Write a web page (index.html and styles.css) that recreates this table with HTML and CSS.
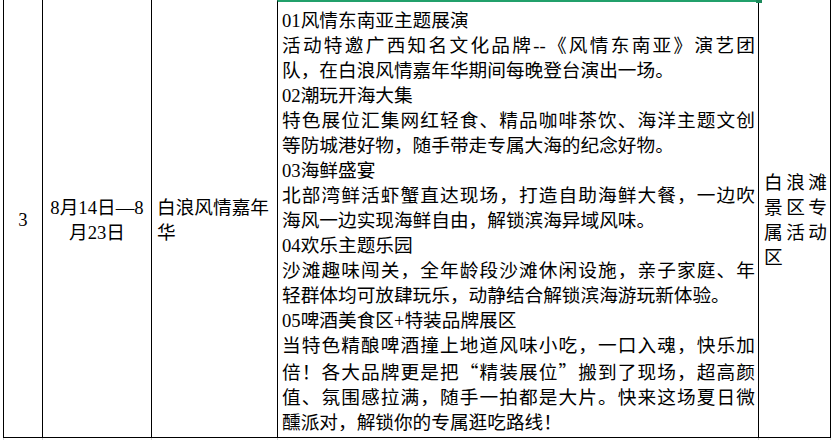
FILE: index.html
```html
<!DOCTYPE html>
<html lang="zh-CN">
<head>
<meta charset="utf-8">
<title>活动安排</title>
<link rel="stylesheet" href="styles.css">
</head>
<body>
<div class="sheet">
  <div class="row">
    <div class="cell c-no">3</div>
    <div class="cell c-date">8月14日—8<br>月23日</div>
    <div class="cell c-name">白浪风情嘉年<br>华</div>
    <div class="cell c-content">
      <div class="ln">01风情东南亚主题展演</div>
      <div class="ln j">活动特邀广西知名文化品牌--《风情东南亚》演艺团</div>
      <div class="ln">队，在白浪风情嘉年华期间每晚登台演出一场。</div>
      <div class="ln">02潮玩开海大集</div>
      <div class="ln j">特色展位汇集网红轻食、精品咖啡茶饮、海洋主题文创</div>
      <div class="ln">等防城港好物，随手带走专属大海的纪念好物。</div>
      <div class="ln">03海鲜盛宴</div>
      <div class="ln j">北部湾鲜活虾蟹直达现场，打造自助海鲜大餐，一边吹</div>
      <div class="ln">海风一边实现海鲜自由，解锁滨海异域风味。</div>
      <div class="ln">04欢乐主题乐园</div>
      <div class="ln j">沙滩趣味闯关，全年龄段沙滩休闲设施，亲子家庭、年</div>
      <div class="ln">轻群体均可放肆玩乐，动静结合解锁滨海游玩新体验。</div>
      <div class="ln">05啤酒美食区+特装品牌展区</div>
      <div class="ln j">当特色精酿啤酒撞上地道风味小吃，一口入魂，快乐加</div>
      <div class="ln j">倍！各大品牌更是把<span class="cjk">“</span>精装展位<span class="cjk">”</span>搬到了现场，超高颜</div>
      <div class="ln j">值、氛围感拉满，随手一拍都是大片。快来这场夏日微</div>
      <div class="ln">醺派对，解锁你的专属逛吃路线！</div>
      <span class="handle"></span>
    </div>
    <div class="cell c-place">白浪滩景区专属活动区</div>
  </div>
  <div class="row grid-below">
    <div class="gcell"></div>
    <div class="gcell"></div>
    <div class="gcell"></div>
    <div class="gcell"></div>
    <div class="gcell last"></div>
  </div>
</div>
</body>
</html>
```

FILE: styles.css
```css
html, body {
  margin: 0;
  padding: 0;
  background: #ffffff;
}

body {
  font-family: "Liberation Serif", "Noto Sans CJK SC", serif;
  font-size: 18.67px;
  line-height: 25px;
  color: #000000;
  width: 834px;
  height: 440px;
  overflow: hidden;
}

.sheet {
  padding-left: 3px;
}

.row {
  display: grid;
  grid-template-columns: 39px 109px 126px 481px 73px;
}

.cell {
  border-left: 1px solid #000000;
  border-bottom: 1px solid #000000;
  box-sizing: border-box;
  height: 438px;
}

.c-no {
  display: flex;
  align-items: center;
  justify-content: center;
  padding-top: 2px;
}

.c-date {
  display: flex;
  align-items: center;
  justify-content: center;
  text-align: center;
  padding-top: 3px;
}

.c-name {
  display: flex;
  align-items: center;
  padding: 3px 0 0 5px;
}

.c-content {
  position: relative;
  border-top: 2px solid #21a06b;
  padding: 6px 3px 0 4px;
  font-family: "Liberation Serif", "Noto Sans CJK SC", serif;
}

.handle {
  position: absolute;
  top: -2px;
  right: -4px;
  width: 6px;
  height: 3px;
  background: #1c8a5b;
}

.ln {
  white-space: nowrap;
}

.ln.j {
  text-align: justify;
  text-align-last: justify;
}

.cjk {
  font-family: "Noto Sans CJK SC", sans-serif;
}

.c-place {
  border-right: 1px solid #000000;
  display: flex;
  align-items: center;
  padding: 3px 3px 0 5px;
}

.c-place {
  text-align: justify;
}

.grid-below {
  height: 2px;
}

.gcell {
  border-left: 1px solid #d9d9d9;
  height: 2px;
}

.gcell.last {
  border-right: 1px solid #d9d9d9;
}
```
